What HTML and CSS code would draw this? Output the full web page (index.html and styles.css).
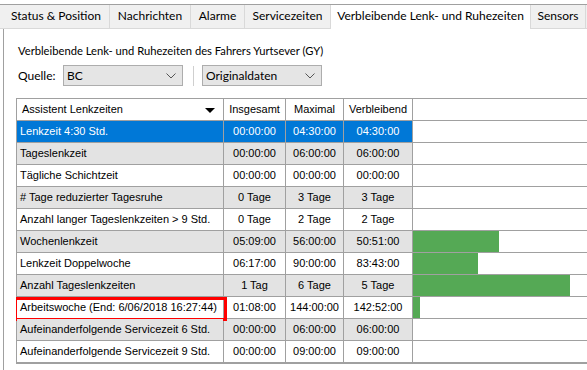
FILE: index.html
```html
<!DOCTYPE html>
<html>
<head>
<meta charset="utf-8">
<link rel="stylesheet" href="styles.css">
</head>
<body>
<div class="window">
  <div class="tabs">
    <div class="tab t1">Status &amp; Position</div>
    <div class="tab t2">Nachrichten</div>
    <div class="tab t3">Alarme</div>
    <div class="tab t4">Servicezeiten</div>
    <div class="tab t5 active">Verbleibende Lenk- und Ruhezeiten</div>
    <div class="tab t6">Sensors</div>
  </div>
  <div class="panel">
    <div class="title">Verbleibende Lenk- und Ruhezeiten des Fahrers Yurtsever (GY)</div>
    <div class="filters">
      <span class="label">Quelle:</span>
      <div class="combo c1"><span>BC</span><svg class="chev" width="10" height="6" viewBox="0 0 10 6"><path d="M0.5 0.5 L5 5 L9.5 0.5" fill="none" stroke="#555" stroke-width="1"/></svg></div>
      <div class="sep"></div>
      <div class="combo c2"><span>Originaldaten</span><svg class="chev" width="10" height="6" viewBox="0 0 10 6"><path d="M0.5 0.5 L5 5 L9.5 0.5" fill="none" stroke="#555" stroke-width="1"/></svg></div>
    </div>
    <div class="gridwrap">
      <table class="grid">
        <colgroup>
          <col class="w1"><col class="w2"><col class="w3"><col class="w4"><col class="w5">
        </colgroup>
        <thead>
          <tr>
            <th class="name">Assistent Lenkzeiten<span class="sort"></span></th>
            <th>Insgesamt</th>
            <th>Maximal</th>
            <th>Verbleibend</th>
            <th class="bar"></th>
          </tr>
        </thead>
        <tbody>
          <tr class="sel"><td class="name">Lenkzeit 4:30 Std.</td><td>00:00:00</td><td>04:30:00</td><td>04:30:00</td><td class="bar"></td></tr>
          <tr class="alt"><td class="name">Tageslenkzeit</td><td>00:00:00</td><td>06:00:00</td><td>06:00:00</td><td class="bar"></td></tr>
          <tr><td class="name">Tägliche Schichtzeit</td><td>00:00:00</td><td>00:00:00</td><td>00:00:00</td><td class="bar"></td></tr>
          <tr class="alt"><td class="name"># Tage reduzierter Tagesruhe</td><td>0 Tage</td><td>3 Tage</td><td>3 Tage</td><td class="bar"></td></tr>
          <tr><td class="name">Anzahl langer Tageslenkzeiten &gt; 9 Std.</td><td>0 Tage</td><td>2 Tage</td><td>2 Tage</td><td class="bar"></td></tr>
          <tr class="alt"><td class="name">Wochenlenkzeit</td><td>05:09:00</td><td>56:00:00</td><td>50:51:00</td><td class="bar"><div class="fill" style="width:86px"></div></td></tr>
          <tr><td class="name">Lenkzeit Doppelwoche</td><td>06:17:00</td><td>90:00:00</td><td>83:43:00</td><td class="bar"><div class="fill" style="width:65px"></div></td></tr>
          <tr class="alt"><td class="name">Anzahl Tageslenkzeiten</td><td>1 Tag</td><td>6 Tage</td><td>5 Tage</td><td class="bar"><div class="fill" style="width:157px"></div></td></tr>
          <tr><td class="name marked">Arbeitswoche (End: 6/06/2018 16:27:44)<span class="redbox"></span></td><td>01:08:00</td><td>144:00:00</td><td>142:52:00</td><td class="bar"><div class="fill" style="width:7px"></div></td></tr>
          <tr class="alt"><td class="name">Aufeinanderfolgende Servicezeit 6 Std.</td><td>00:00:00</td><td>06:00:00</td><td>06:00:00</td><td class="bar"></td></tr>
          <tr><td class="name">Aufeinanderfolgende Servicezeit 9 Std.</td><td>00:00:00</td><td>09:00:00</td><td>09:00:00</td><td class="bar"></td></tr>
        </tbody>
      </table>
    </div>
  </div>
</div>
</body>
</html>
```

FILE: styles.css
```css
html, body {
  margin: 0;
  padding: 0;
  background: #ffffff;
}
body {
  width: 587px;
  height: 370px;
  overflow: hidden;
  font-family: "Lato", "Liberation Sans", sans-serif;
}
.window {
  padding-top: 4px;
}
.tabs {
  display: flex;
  height: 23px;
  border-top: 1px solid #a0a0a0;
  border-bottom: 1px solid #d9d9d9;
  background: #f0f0f0;
  padding-left: 3px;
}
.tab {
  box-sizing: border-box;
  height: 23px;
  line-height: 22px;
  font-size: 12px;
  color: #000;
  text-align: center;
  border-right: 1px solid #d9d9d9;
  white-space: nowrap;
}
.t1 { width: 107px; }
.t2 { width: 81px; }
.t3 { width: 54px; }
.t4 { width: 86px; }
.t5 { width: 200px; }
.t6 { width: 55px; border-right: 1px solid #d9d9d9; }
.tab.active {
  background: #ffffff;
  height: 24px;
  border-left: 1px solid #d9d9d9;
  margin-left: -1px;
  width: 201px;
}
.panel {
  margin-left: 3px;
  border-left: 1px solid #a0a0a0;
  height: 342px;
  padding-left: 12px;
  box-sizing: border-box;
}
.title {
  font-size: 11.2px;
  padding-top: 13px;
  height: 17px;
  line-height: 17px;
  color: #000;
  padding-left: 2px;
}
.filters {
  display: flex;
  align-items: center;
  margin-top: 6px;
  height: 21px;
  font-size: 12px;
}
.label {
  box-sizing: border-box;
  width: 47px;
  padding-left: 2px;
}
.combo {
  box-sizing: border-box;
  height: 21px;
  width: 120px;
  background: #e5e5e5;
  border: 1px solid #adadad;
  display: flex;
  align-items: center;
  justify-content: space-between;
  padding: 0 6px 0 3px;
}
.chev { display: block; }
.sep {
  width: 1px;
  height: 20px;
  background: #cfcfcf;
  margin: 0 8px 0 10px;
}
.gridwrap {
  margin-top: 12px;
  width: 571px;
  overflow: hidden;
}
.grid {
  border-collapse: collapse;
  table-layout: fixed;
  width: 620px;
  font-family: "Liberation Sans", sans-serif;
  font-size: 11px;
  color: #000;
}
.w1 { width: 207px; }
.w2 { width: 62px; }
.w3 { width: 58px; }
.w4 { width: 69px; }
.w5 { width: 224px; }
.grid th, .grid td {
  border: 1px solid #a0a0a0;
  height: 21px;
  padding: 0;
  text-align: center;
  white-space: nowrap;
  font-weight: normal;
  line-height: 21px;
}
.grid th {
  background: #fff;
}
.grid .name {
  text-align: left;
  padding-left: 3px;
  position: relative;
}
.grid th.name {
  padding-left: 5px;
}
.sort {
  position: absolute;
  right: 8px;
  top: 9px;
  width: 0;
  height: 0;
  border-left: 5px solid transparent;
  border-right: 5px solid transparent;
  border-top: 5px solid #000;
}
.grid tr.alt td { background: #e3e3e3; }
.grid tr.sel td { background: #0078d7; color: #fff; }
.grid td.bar, .grid tr.alt td.bar, .grid tr.sel td.bar { background: #fff; }
.grid td.bar { vertical-align: top; }
.fill {
  height: 21px;
  background: #55a955;
}
.grid tbody tr:last-child td { border-bottom: 2px solid #a0a0a0; }
.redbox {
  position: absolute;
  left: -3px;
  top: 0;
  right: -4px;
  bottom: -3px;
  border: 3px solid #ff0000;
  pointer-events: none;
}
```
